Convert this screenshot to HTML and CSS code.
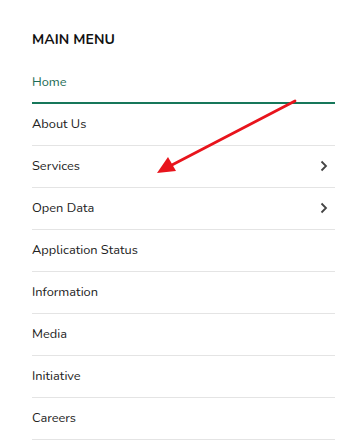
FILE: index.html
```html
<!DOCTYPE html>
<html>
<head>
<meta charset="utf-8">
<link rel="stylesheet" href="styles.css">
</head>
<body>
<nav class="menu">
  <h2 class="menu-title">MAIN MENU</h2>
  <ul class="menu-list">
    <li class="menu-item active">Home</li>
    <li class="menu-item">About Us</li>
    <li class="menu-item">Services<svg class="chev" viewBox="0 0 8 12" width="8" height="12"><path d="M1.5 1.5 L6 6 L1.5 10.5" fill="none" stroke="#444" stroke-width="1.8"/></svg></li>
    <li class="menu-item">Open Data<svg class="chev" viewBox="0 0 8 12" width="8" height="12"><path d="M1.5 1.5 L6 6 L1.5 10.5" fill="none" stroke="#444" stroke-width="1.8"/></svg></li>
    <li class="menu-item">Application Status</li>
    <li class="menu-item">Information</li>
    <li class="menu-item">Media</li>
    <li class="menu-item">Initiative</li>
    <li class="menu-item">Careers</li>
  </ul>
</nav>
<svg class="annot" width="364" height="445" viewBox="0 0 364 445">
  <line x1="295" y1="101" x2="170" y2="166" stroke="#e8141c" stroke-width="2.8" stroke-linecap="round"/>
  <polygon points="157,173 168,157 176,171" fill="#e8141c"/>
</svg>
</body>
</html>
```
FILE: styles.css
```css
html, body {
  margin: 0;
  padding: 0;
  background: #fff;
}
body {
  font-family: "Nunito", Lato, "Open Sans", sans-serif;
  color: #222;
  position: relative;
  width: 364px;
  height: 445px;
  overflow: hidden;
}
.menu {
  padding: 30px 29px 0 32px;
}
.menu-title {
  margin: 0;
  font-size: 14px;
  line-height: 20px;
  font-weight: 700;
  color: #111;
  letter-spacing: 0.1px;
}
.menu-list {
  list-style: none;
  margin: 22px 0 0;
  padding: 0;
}
.menu-item {
  display: flex;
  align-items: center;
  justify-content: space-between;
  box-sizing: border-box;
  height: 42px;
  padding-bottom: 2px;
  font-size: 12.8px;
  border-bottom: 1px solid #e4e4e4;
  color: #222;
}
.menu-item.active {
  height: 32px;
  padding-bottom: 10px;
  color: #1c6b55;
  border-bottom: 2px solid #16775a;
}
.chev {
  margin-right: 7px;
}
.annot {
  position: absolute;
  left: 0;
  top: 0;
  pointer-events: none;
}
```
